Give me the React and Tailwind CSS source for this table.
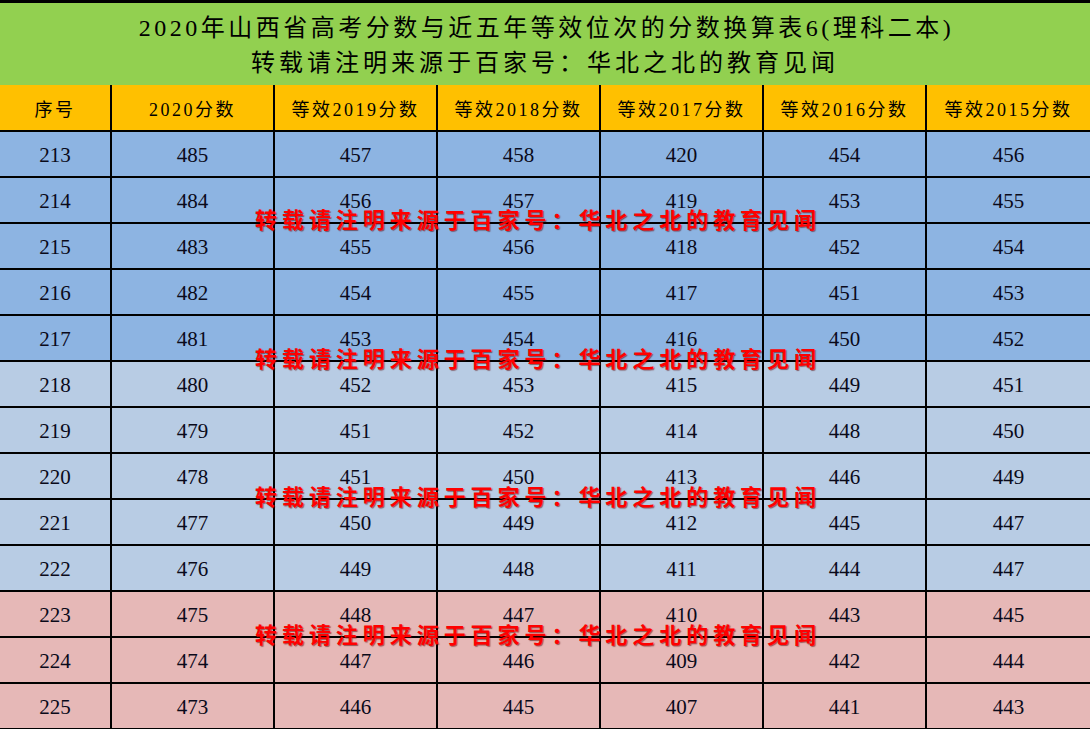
const HEAD = ["序号", "2020分数", "等效2019分数", "等效2018分数", "等效2017分数", "等效2016分数", "等效2015分数"];

const ROWS = [
  [213, 485, 457, 458, 420, 454, 456],
  [214, 484, 456, 457, 419, 453, 455],
  [215, 483, 455, 456, 418, 452, 454],
  [216, 482, 454, 455, 417, 451, 453],
  [217, 481, 453, 454, 416, 450, 452],
  [218, 480, 452, 453, 415, 449, 451],
  [219, 479, 451, 452, 414, 448, 450],
  [220, 478, 451, 450, 413, 446, 449],
  [221, 477, 450, 449, 412, 445, 447],
  [222, 476, 449, 448, 411, 444, 447],
  [223, 475, 448, 447, 410, 443, 445],
  [224, 474, 447, 446, 409, 442, 444],
  [225, 473, 446, 445, 407, 441, 443],
];

function rowBg(i) {
  if (i < 5) return "bg-[#8db4e2]";
  if (i < 10) return "bg-[#b8cce4]";
  return "bg-[#e6b8b7]";
}

const MARK = "转载请注明来源于百家号：华北之北的教育见闻";
const MARK_TOPS = ["top-[207px]", "top-[346px]", "top-[484px]", "top-[622px]"];

export default function App() {
  return (
    <div className="relative w-[1090px] h-[729px] overflow-hidden bg-white font-['Liberation_Serif','Noto_Sans_CJK_SC',serif] text-black">
      {/* title block */}
      <div className="h-[85px] border-t-[3px] border-black bg-[#92d050] flex flex-col items-center justify-center pt-[2px]">
        <div className="text-[24px] leading-[34px] tracking-[3.5px] pl-[3px]">2020年山西省高考分数与近五年等效位次的分数换算表6(理科二本)</div>
        <div className="text-[24px] leading-[34px] tracking-[4px] pt-[1px]">转载请注明来源于百家号：华北之北的教育见闻</div>
      </div>

      {/* column header */}
      <div className="grid grid-cols-[112px_repeat(6,163px)] h-[47px] bg-[#ffc000] border-b-2 border-black">
        {HEAD.map((h, i) => (
          <div key={h} className={`flex items-center justify-center pt-[5px] text-[18px] tracking-[2.5px] ${i < 6 ? "border-r-2 border-black" : ""}`}>
            {h}
          </div>
        ))}
      </div>

      {/* data rows */}
      {ROWS.map((r, i) => (
        <div key={r[0]} className={`grid grid-cols-[112px_repeat(6,163px)] h-[46px] border-b-2 border-black ${rowBg(i)}`}>
          {r.map((v, j) => (
            <div key={j} className={`flex items-center justify-center pt-[3px] text-[21px] text-[#0a0a1a] ${j < 6 ? "border-r-2 border-black" : ""}`}>
              {v}
            </div>
          ))}
        </div>
      ))}

      {/* watermarks */}
      {MARK_TOPS.map((t) => (
        <div key={t} className={`absolute left-[255px] ${t} text-[22px] leading-[28px] font-bold tracking-[4.95px] text-[#ff0000] whitespace-nowrap [text-shadow:1px_1px_1px_rgba(90,0,0,0.55)]`}>
          {MARK}
        </div>
      ))}
    </div>
  );
}
